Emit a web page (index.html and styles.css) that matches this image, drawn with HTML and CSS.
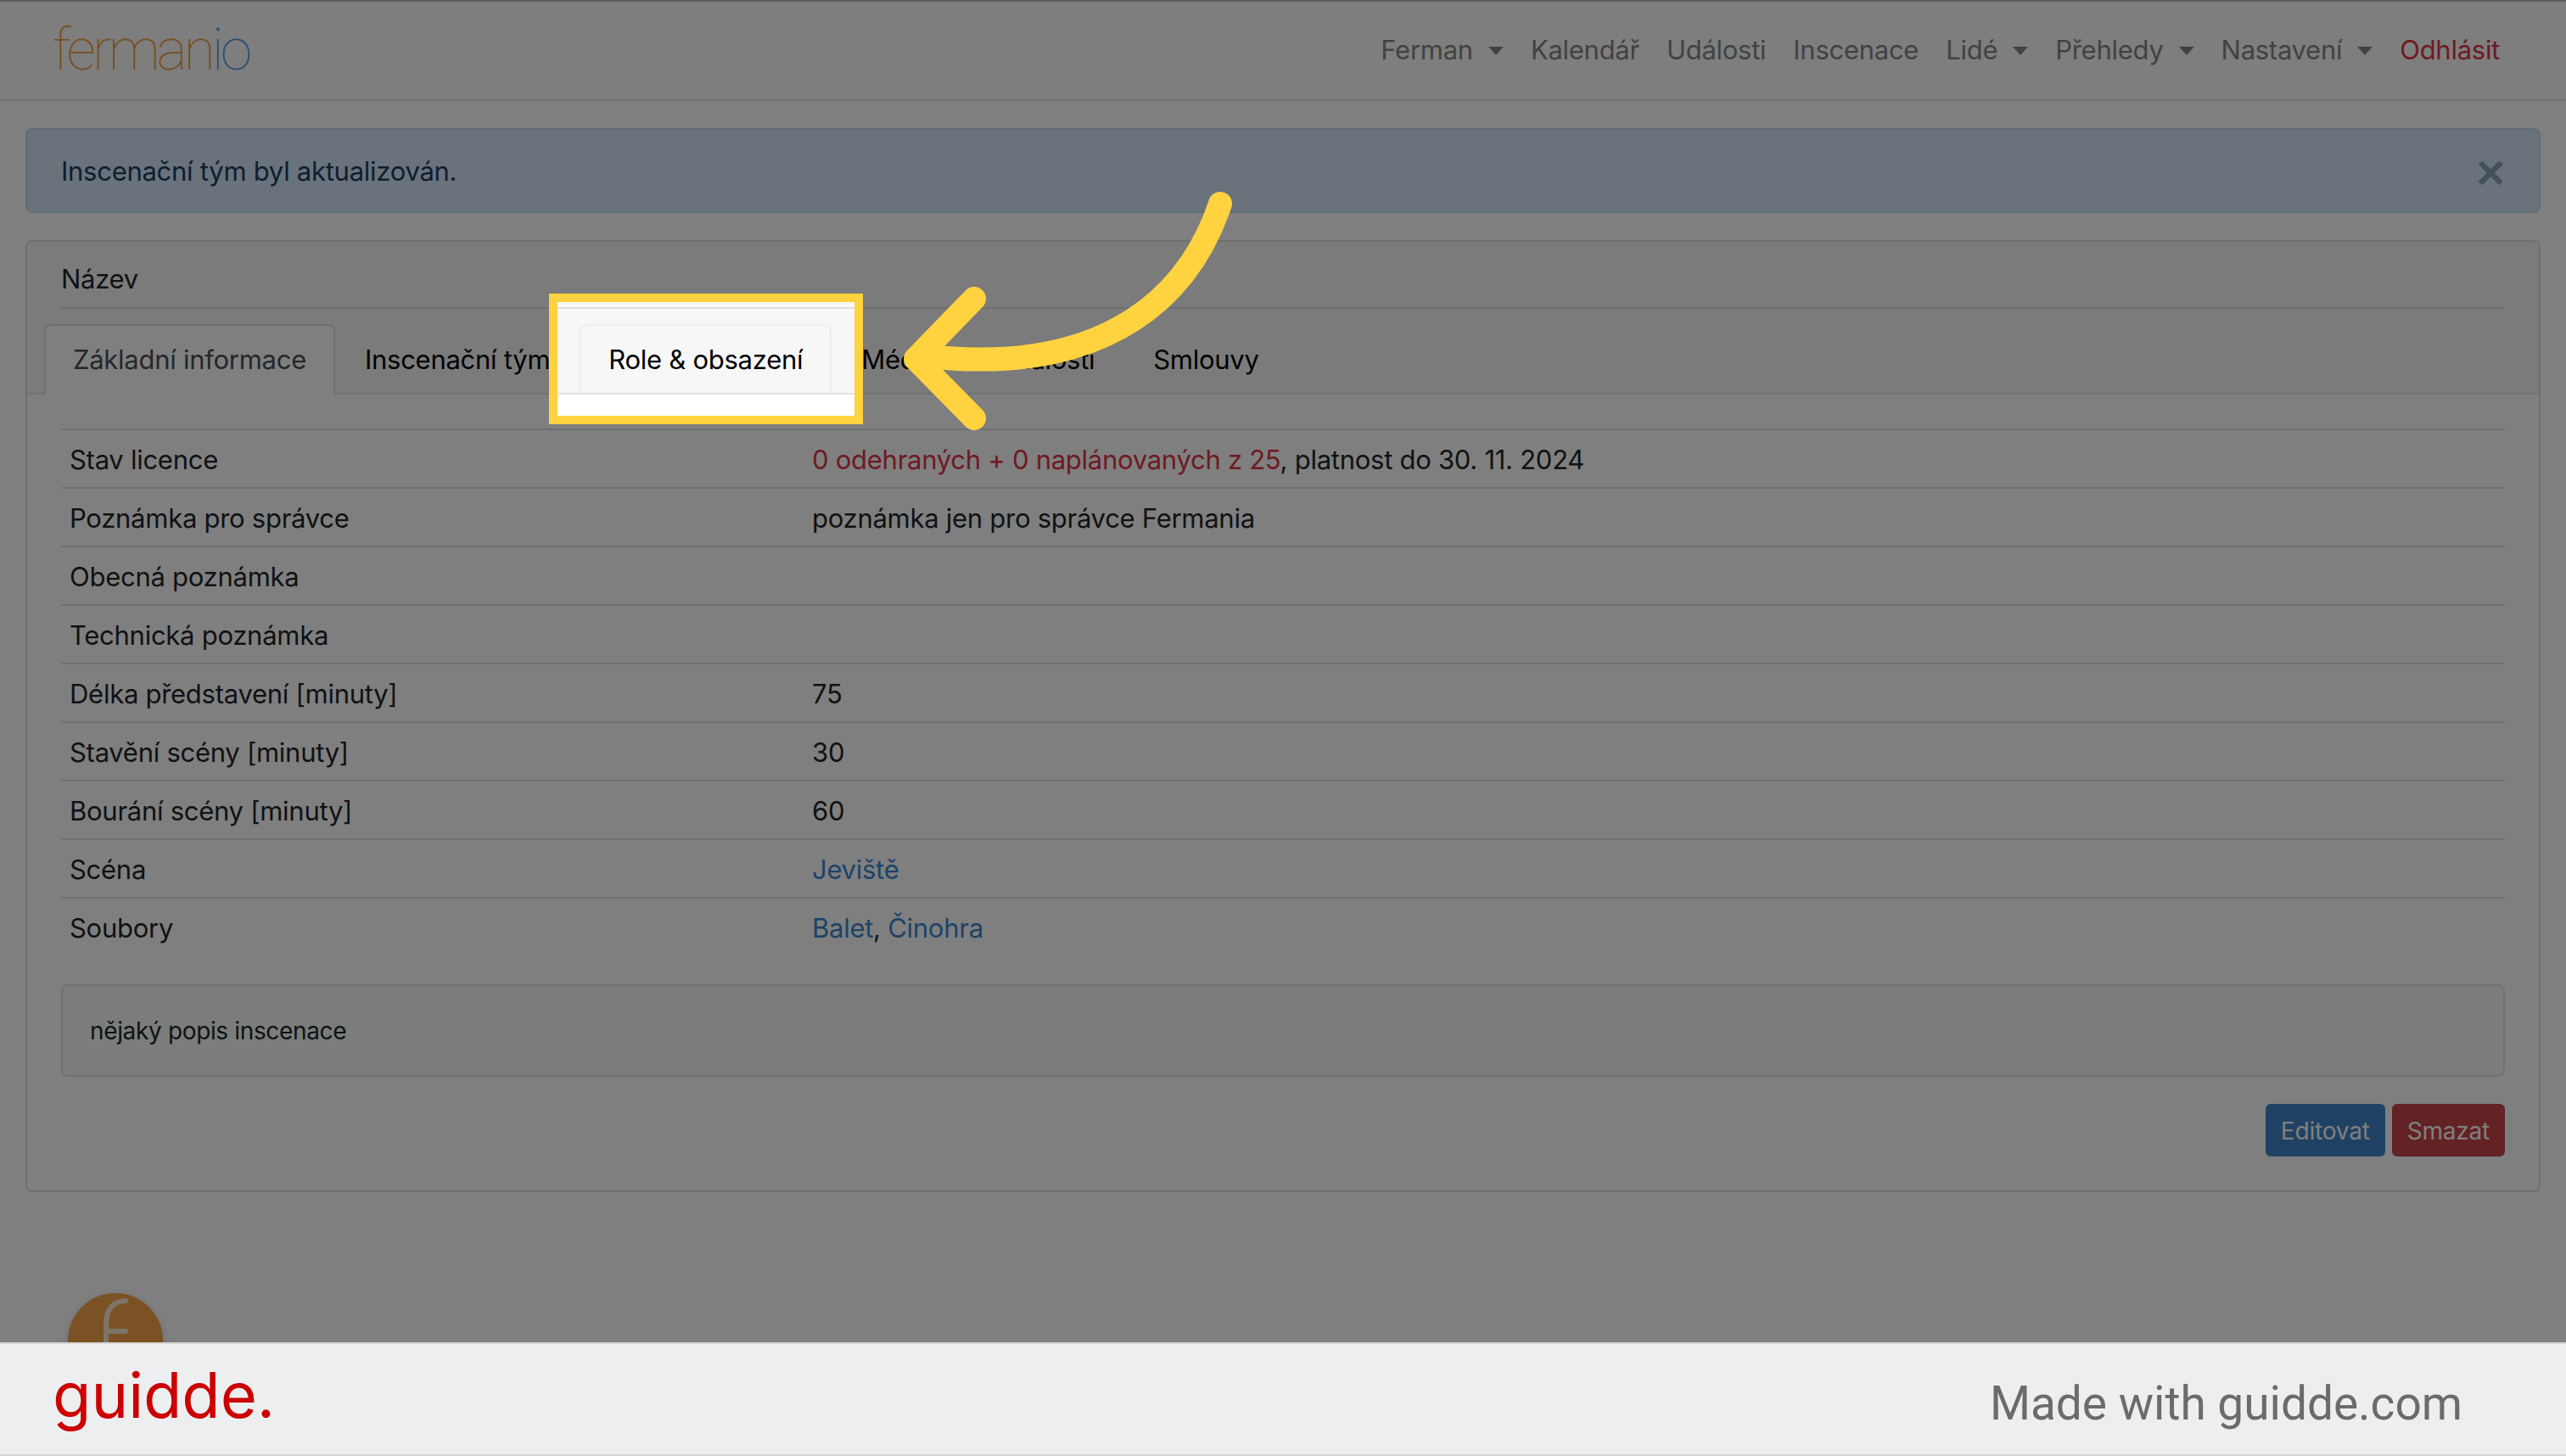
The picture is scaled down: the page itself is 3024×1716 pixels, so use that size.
FILE: index.html
```html
<!DOCTYPE html>
<html lang="cs">
<head>
    <meta charset="UTF-8">
    <title>Inscenace</title>
    <link rel="stylesheet" href="styles.css">
</head>
<body>
    <div class="stage">
        <div class="nav">
            <a class="logo" href="#">ferman<span class="logo-io">io</span></a>
            <div class="nav-links">
                <a class="caret" href="#">Ferman</a>
                <a href="#">Kalendář</a>
                <a href="#">Události</a>
                <a href="#">Inscenace</a>
                <a class="caret" href="#">Lidé</a>
                <a class="caret" href="#">Přehledy</a>
                <a class="caret" href="#">Nastavení</a>
                <a class="logout" href="#">Odhlásit</a>
            </div>
        </div>

        <div class="content">
            <div class="alert">
                <span>Inscenační tým byl aktualizován.</span>
                <button class="close" type="button">×</button>
            </div>

            <div class="card">
                <div class="card-header">
                    <div class="title">Název</div>
                    <div class="tabs">
                        <a class="tab active" href="#">Základní informace</a>
                        <a class="tab" href="#">Inscenační tým</a>
                        <a class="tab" href="#">Role &amp; obsazení</a>
                        <a class="tab" href="#">Média</a>
                        <a class="tab" href="#">Události</a>
                        <a class="tab" href="#">Smlouvy</a>
                    </div>
                </div>
                <div class="card-body">
                    <div class="info-table">
                        <div class="row"><div>Stav licence</div><div><span class="danger">0 odehraných + 0 naplánovaných z 25</span>, platnost do 30. 11. 2024</div></div>
                        <div class="row"><div>Poznámka pro správce</div><div>poznámka jen pro správce Fermania</div></div>
                        <div class="row"><div>Obecná poznámka</div><div></div></div>
                        <div class="row"><div>Technická poznámka</div><div></div></div>
                        <div class="row"><div>Délka představení [minuty]</div><div>75</div></div>
                        <div class="row"><div>Stavění scény [minuty]</div><div>30</div></div>
                        <div class="row"><div>Bourání scény [minuty]</div><div>60</div></div>
                        <div class="row"><div>Scéna</div><div><a href="#">Jeviště</a></div></div>
                        <div class="row"><div>Soubory</div><div><a href="#">Balet</a>, <a href="#">Činohra</a></div></div>
                    </div>
                    <div class="well">nějaký popis inscenace</div>
                    <div class="actions">
                        <button class="btn btn-primary" type="button">Editovat</button>
                        <button class="btn btn-danger" type="button">Smazat</button>
                    </div>
                </div>
            </div>
        </div>

        <div class="chat-bubble">
            <svg width="112" height="112" viewBox="0 0 112 112">
                <path d="M45 112V38Q45 10 68 9M45 45H68" fill="none" stroke="#fff" stroke-opacity="0.75" stroke-width="6" stroke-linecap="round"/>
            </svg>
        </div>

        <div class="spotlight"></div>

        <svg class="arrow" width="420" height="300" viewBox="0 0 420 300">
            <path d="M396 28C362 130 270 232 50 208" fill="none" stroke="#ffd23f" stroke-width="28" stroke-linecap="round"/>
            <path d="M106 140L37 211L106 281" fill="none" stroke="#ffd23f" stroke-width="28" stroke-linecap="round" stroke-linejoin="round"/>
        </svg>
    </div>

    <div class="footer">
        <span class="brand">guidde.</span>
        <span class="made">Made with guidde.com</span>
    </div>
</body>
</html>
```

FILE: styles.css
```css
* {
    margin: 0;
    padding: 0;
    box-sizing: border-box;
}

body {
    margin: 0;
    background-color: white;
    font-family: Inter, 'Liberation Sans', sans-serif;
    font-size: 31px;
    letter-spacing: -0.27px;
    line-height: 48px;
    color: #212529;
    overflow: hidden;
}

a {
    text-decoration: none;
    color: #3a86d0;
}

.stage {
    position: relative;
    height: 1582px;
    overflow: hidden;
}

.nav {
    display: flex;
    justify-content: space-between;
    align-items: center;
    height: 119px;
    padding: 0 78px 2px 62px;
    background-color: #fbfdfb;
    border-top: 2px solid #b8bcbc;
    border-bottom: 2px solid #e4e4e4;
}

.logo {
    font-family: Roboto, sans-serif;
    font-weight: 100;
    font-size: 68px;
    letter-spacing: -4px;
    line-height: 90px;
    color: #f09a3c;
}

.logo-io {
    color: #5a9fe0;
}

.nav-links {
    display: flex;
    gap: 32px;
}

.nav-links a {
    color: #858585;
}

.nav-links a.logout {
    color: #dc3545;
}

.caret::after {
    content: "";
    display: inline-block;
    margin-left: 18px;
    vertical-align: 5px;
    border-top: 10px solid currentColor;
    border-left: 9px solid transparent;
    border-right: 9px solid transparent;
}

.content {
    padding: 32px 30px 0;
}

.alert {
    display: flex;
    justify-content: space-between;
    align-items: center;
    height: 100px;
    padding: 2px 40px 0 40px;
    margin-bottom: 32px;
    color: #1a3c60;
    background-color: #d4e4f6;
    border: 2px solid #c4d8ee;
    border-radius: 8px;
}

.close {
    border: none;
    background: none;
    font-family: 'Liberation Sans', sans-serif;
    font-weight: 700;
    font-size: 58px;
    line-height: 48px;
    margin-top: 2px;
    color: #88a0b8;
}

.card {
    border: 2px solid #dfdfdf;
    border-radius: 8px;
    height: 1122px;
}

.card-header {
    background-color: #f7f7f7;
    height: 180px;
    padding: 0 0 0 20px;
    border-bottom: 2px solid #dee2e6;
    border-radius: 6px 6px 0 0;
}

.title {
    margin: 0 40px 0 20px;
    height: 79px;
    padding-top: 20px;
    border-bottom: 2px solid #dfdfdf;
    color: #212529;
}

.tabs {
    display: flex;
    gap: 1px;
    margin-top: 18px;
}

.tab {
    padding: 16px 32px;
    height: 84px;
    color: black;
    border: 2px solid transparent;
    border-radius: 8px 8px 0 0;
}

.tab.active {
    background-color: white;
    color: #495057;
    border-color: #dee2e6 #dee2e6 white;
}

.tab:nth-child(3) {
    border-color: #eeeff1 #eeeff1 transparent;
}

.card-body {
    padding: 40px 40px 0;
}

.row {
    display: grid;
    grid-template-columns: 875px 1fr;
    height: 69px;
    padding: 11px 10px 0;
    border-top: 2px solid #dee2e6;
}

.danger {
    color: #dc3545;
}

.well {
    margin-top: 34px;
    height: 109px;
    padding: 0 32px;
    display: flex;
    align-items: center;
    font-size: 28px;
    letter-spacing: -0.35px;
    background-color: #f5faf6;
    border: 2px solid #dee2e6;
    border-radius: 8px;
}

.actions {
    display: flex;
    justify-content: flex-end;
    gap: 8px;
    margin-top: 32px;
}

.btn {
    height: 62px;
    padding: 2px 18px 0;
    font-family: Inter, 'Liberation Sans', sans-serif;
    font-size: 28px;
    letter-spacing: -0.2px;
    color: white;
    border: none;
    border-radius: 6px;
}

.btn-primary {
    background-color: #3f84c8;
}

.btn-danger {
    background-color: #c64448;
}

.chat-bubble {
    position: absolute;
    left: 80px;
    top: 1524px;
    width: 112px;
    height: 112px;
    border-radius: 50%;
    background-color: #f4a446;
    box-shadow: 0 2px 10px rgba(0,0,0,0.15);
}

/* the dimmed layer is the shadow, so the box itself shows the page undimmed */
.spotlight {
    position: absolute;
    left: 647px;
    top: 346px;
    width: 370px;
    height: 154px;
    border: 10px solid #ffd23f;
    box-shadow: 0 0 0 3100px rgba(0,0,0,0.5);
}

.arrow {
    position: absolute;
    left: 1042px;
    top: 212px;
}

.footer {
    display: flex;
    justify-content: space-between;
    align-items: center;
    height: 134px;
    padding: 0 122px 0 62px;
    background-color: #edeef0;
    border-top: 2px solid #d8d8d8;
    border-bottom: 2px solid #d8d8d8;
}

.brand {
    font-family: Inter, sans-serif;
    font-weight: 400;
    font-size: 74px;
    letter-spacing: 0;
    line-height: 80px;
    color: #cc0000;
    margin-bottom: 10px;
}

.made {
    font-family: Roboto, sans-serif;
    font-size: 55px;
    letter-spacing: 0;
    line-height: 70px;
    color: #6a6b6d;
    margin-top: 10px;
}
```
